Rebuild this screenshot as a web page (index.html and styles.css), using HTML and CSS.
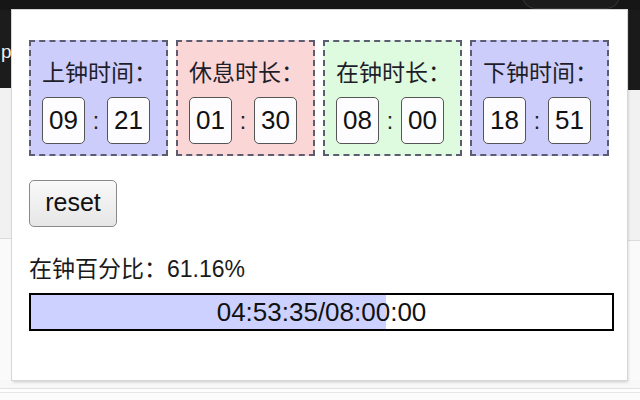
FILE: index.html
```html
<!DOCTYPE html>
<html lang="zh-CN">
<head>
<meta charset="utf-8">
<title>在钟时间</title>
<link rel="stylesheet" href="styles.css">
</head>
<body>
<div class="topbar"><div class="toolbtn"></div></div>
<div class="main">
  <div class="side side-left">
    <div class="side-dark"><span class="peek">p</span></div>
    <div class="side-light"></div>
    <div class="side-lower"></div>
  </div>
  <div class="popup">
    <div class="cards">
      <div class="card card-blue">
        <div class="label">上钟时间：</div>
        <div class="time"><span class="box">09</span><span class="sep">:</span><span class="box">21</span></div>
      </div>
      <div class="card card-pink">
        <div class="label">休息时长：</div>
        <div class="time"><span class="box">01</span><span class="sep">:</span><span class="box">30</span></div>
      </div>
      <div class="card card-green">
        <div class="label">在钟时长：</div>
        <div class="time"><span class="box">08</span><span class="sep">:</span><span class="box">00</span></div>
      </div>
      <div class="card card-blue">
        <div class="label">下钟时间：</div>
        <div class="time"><span class="box">18</span><span class="sep">:</span><span class="box">51</span></div>
      </div>
    </div>
    <button class="reset" type="button">reset</button>
    <div class="percent">在钟百分比：61.16%</div>
    <div class="progress">
      <div class="fill" style="width:61.16%"></div>
      <div class="progress-text">04:53:35/08:00:00</div>
    </div>
  </div>
  <div class="side side-right">
    <div class="side-dark"></div>
    <div class="side-light"></div>
    <div class="side-lower"></div>
  </div>
</div>
<div class="bottom"></div>
</body>
</html>
```

FILE: styles.css
```css
html, body {
  margin: 0;
  padding: 0;
}
body {
  width: 640px;
  height: 400px;
  overflow: hidden;
  background: #f7f7f7;
  font-family: "Liberation Sans", "Noto Sans CJK SC", sans-serif;
  color: #1a1a1a;
}
.topbar {
  height: 10px;
  background: #161616;
  position: relative;
}
.toolbtn {
  position: absolute;
  left: 522px;
  top: -6px;
  width: 96px;
  height: 14px;
  border-radius: 0 0 14px 14px;
  border: 1px solid #333;
  border-top: none;
  background: #1b1b1b;
}
.main {
  display: flex;
  height: 370px;
}
.side {
  display: flex;
  flex-direction: column;
}
.side-left {
  width: 12px;
}
.side-right {
  flex: 1;
}
.side-dark {
  height: 78px;
  background: #1c1c1c;
  overflow: hidden;
}
.side-right .side-dark {
  height: 80px;
  background: #1a1a1a;
  border-left: 2px solid #2c2c2c;
}
.peek {
  display: block;
  margin-top: 30px;
  margin-left: 1px;
  color: #f0f0f0;
  font-size: 19px;
  line-height: 24px;
}
.side-light {
  height: 150px;
  background: #f1f1f1;
  border-bottom: 1px solid #dcdcdc;
}
.side-lower {
  flex: 1;
  background: #fafafa;
}
.popup {
  width: 615px;
  box-sizing: border-box;
  background: #fff;
  padding: 30px 13px 0 17px;
  box-shadow: 0 0 0 1px #d6d6d6, 1px 2px 3px rgba(0, 0, 0, 0.18);
  position: relative;
  z-index: 1;
}
.cards {
  display: flex;
  gap: 8px;
}
.card {
  width: 139px;
  height: 116px;
  box-sizing: border-box;
  border: 2px dashed #5d5d72;
  padding: 17px 0 0 11px;
}
.card-blue { background: #cdcdfc; }
.card-pink { background: #fbd6d6; }
.card-green { background: #dffbdf; }
.label {
  font-size: 23px;
  line-height: 28px;
  height: 28px;
  white-space: nowrap;
  color: #1e1e2a;
}
.time {
  display: flex;
  align-items: center;
  margin-top: 10px;
}
.box {
  width: 43px;
  height: 47px;
  box-sizing: border-box;
  border: 1.5px solid #555;
  border-radius: 5px;
  background: #fdfdff;
  font-size: 26px;
  line-height: 44px;
  text-align: center;
  color: #111;
}
.sep {
  width: 22px;
  text-align: center;
  font-size: 23px;
  line-height: 44px;
  color: #222;
}
.reset {
  display: block;
  margin-top: 24px;
  width: 88px;
  height: 47px;
  box-sizing: border-box;
  border: 1.5px solid #8a8a8a;
  border-radius: 5px;
  background: linear-gradient(#f9f9f9, #e6e6e6);
  font-family: "Liberation Sans", sans-serif;
  font-size: 25px;
  color: #111;
  padding: 0 0 2px 0;
}
.percent {
  margin-top: 28px;
  font-size: 23px;
  line-height: 28px;
  color: #1a1a1a;
  white-space: nowrap;
}
.progress {
  position: relative;
  margin-top: 10px;
  width: 585px;
  height: 38px;
  box-sizing: border-box;
  border: 2px solid #000;
  background: #fff;
}
.fill {
  height: 100%;
  background: #ccd1ff;
}
.progress-text {
  position: absolute;
  left: 0;
  right: 0;
  top: 0;
  bottom: 0;
  text-align: center;
  font-size: 26px;
  line-height: 34px;
  color: #111;
}
.bottom {
  height: 20px;
  background: #fbfbfb;
  box-sizing: border-box;
  border-top: 8px solid #f8f8f8;
  box-shadow: inset 0 1px 0 #e2e2e2, inset 0 4px 0 #fdfdfd, inset 0 5px 0 #e6e6e6;
}
```
